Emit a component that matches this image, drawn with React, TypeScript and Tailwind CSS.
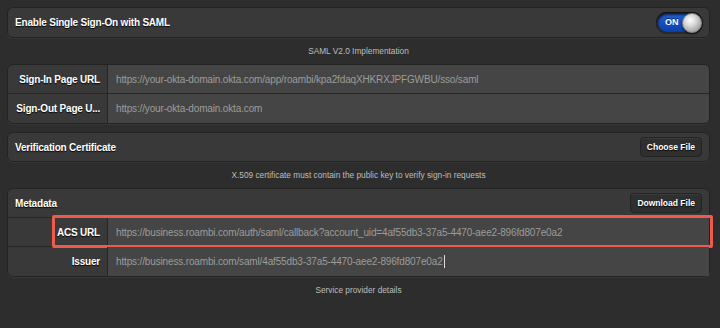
import React from 'react';

const font = "font-['Liberation_Sans',Arial,sans-serif]";
const labelShadow = '[text-shadow:0_1px_1px_rgba(0,0,0,0.9)]';
const labelText = `text-[10px] tracking-[-0.2px] font-bold text-white whitespace-nowrap ${labelShadow}`;

interface FieldRowProps {
  label: string;
  value: string;
  last?: boolean;
  caret?: boolean;
  highlight?: boolean;
}

const FieldRow: React.FC<FieldRowProps> = ({ label, value, last, caret, highlight }) => (
  <div className={`relative flex h-[29px] ${last ? '' : 'border-b border-[#262626]'}`}>
    <div className={`w-[100px] shrink-0 flex items-center justify-end pr-[7px] border-r border-[#262626] ${labelText}`}>
      {label}
    </div>
    <div className="flex-1 flex items-center pl-[8px] bg-[#454545] text-[10px] tracking-[-0.15px] text-[#9c9c9c] whitespace-nowrap overflow-hidden">
      {value}
      {caret && <span className="inline-block w-px h-[13px] bg-[#ddd] ml-px" />}
    </div>
    {highlight && (
      <div className="absolute left-[44px] right-[-4px] top-[-3px] bottom-[-2px] border-[3px] border-[#ee5a4c] rounded-[2px] pointer-events-none" />
    )}
  </div>
);

const Toggle: React.FC = () => (
  <div className="flex items-center rounded-full p-[2px] bg-[#2a2a2a] shadow-[inset_0_1px_2px_rgba(0,0,0,0.8)]">
    <div className="relative w-[43px] h-[18px] rounded-full bg-gradient-to-b from-[#1f5fd8] to-[#0c3fa8] shadow-[inset_0_1px_2px_rgba(0,0,0,0.6)]">
      <span className="absolute left-[7px] top-0 h-[18px] flex items-center text-[9px] font-bold text-white [text-shadow:0_-1px_0_rgba(0,0,0,0.6)]">
        ON
      </span>
      <span className="absolute right-[-1px] top-[-1px] w-[20px] h-[20px] rounded-full border border-[#888] bg-[radial-gradient(circle_at_40%_35%,#ffffff_0%,#d9d9d9_35%,#9a9a9a_80%,#7a7a7a_100%)] shadow-[0_1px_2px_rgba(0,0,0,0.7)]" />
    </div>
  </div>
);

const DarkButton: React.FC<{ children: React.ReactNode }> = ({ children }) => (
  <button className={`h-[20px] px-[6px] rounded-[4px] bg-[#2f2f2f] border border-[#232323] shadow-[inset_0_1px_0_rgba(255,255,255,0.06)] text-[8.5px] font-bold text-white whitespace-nowrap ${labelShadow}`}>
    {children}
  </button>
);

const Caption: React.FC<{ children: React.ReactNode }> = ({ children }) => (
  <div className="h-[26px] flex items-center justify-center text-[8.3px] text-[#bdbdbd]">{children}</div>
);

const panel = 'rounded-[6px] border border-[#232323] bg-[#393939] shadow-[0_1px_0_rgba(255,255,255,0.05)]';

export default function App() {
  return (
    <div className={`${font} w-[720px] h-[328px] overflow-hidden bg-[#2d2d2d] pt-[7px] pl-[7px] pr-[10px]`}>
      <div className={`${panel} h-[31px] flex items-center justify-between pl-[7px] pr-[6px]`}>
        <span className={labelText}>Enable Single Sign-On with SAML</span>
        <Toggle />
      </div>

      <Caption>SAML V2.0 Implementation</Caption>

      <div className={`${panel} overflow-hidden`}>
        <FieldRow
          label="Sign-In Page URL"
          value="https://your-okta-domain.okta.com/app/roambi/kpa2fdaqXHKRXJPFGWBU/sso/saml"
        />
        <FieldRow label="Sign-Out Page U..." value="https://your-okta-domain.okta.com" last />
      </div>

      <div className={`${panel} h-[30px] mt-[8px] flex items-center justify-between pl-[7px] pr-[7px]`}>
        <span className={labelText}>Verification Certificate</span>
        <DarkButton>Choose File</DarkButton>
      </div>

      <Caption>X.509 certificate must contain the public key to verify sign-in requests</Caption>

      <div className={panel}>
        <div className="h-[29px] flex items-center justify-between pl-[7px] pr-[7px] border-b border-[#262626]">
          <span className={labelText}>Metadata</span>
          <DarkButton>Download File</DarkButton>
        </div>
        <FieldRow
          label="ACS URL"
          value="https://business.roambi.com/auth/saml/callback?account_uid=4af55db3-37a5-4470-aee2-896fd807e0a2"
          highlight
        />
        <FieldRow
          label="Issuer"
          value="https://business.roambi.com/saml/4af55db3-37a5-4470-aee2-896fd807e0a2"
          caret
          last
        />
      </div>

      <Caption>Service provider details</Caption>
    </div>
  );
}
